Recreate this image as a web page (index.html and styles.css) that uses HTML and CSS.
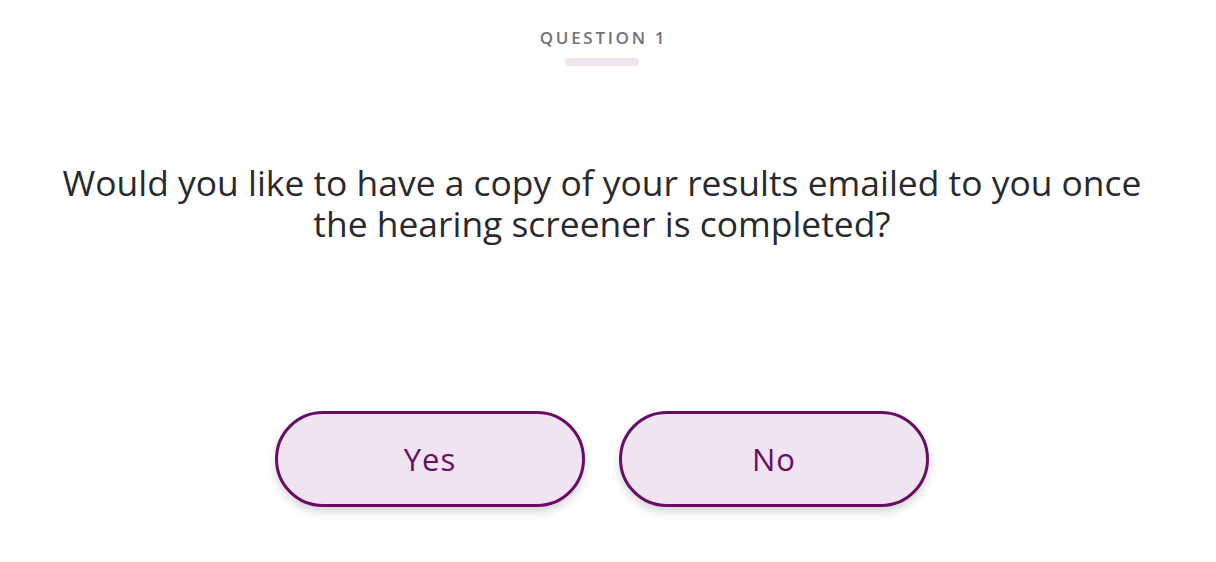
FILE: index.html
```html
<!DOCTYPE html>
<html lang="en">
<head>
  <meta charset="UTF-8">
  <meta name="viewport" content="width=device-width, initial-scale=1.0">
  <title>Hearing Screener</title>
  <link rel="stylesheet" href="styles.css">
</head>
<body>
  <div class="screen">
    <div class="step">
      <div class="step-label">QUESTION 1</div>
      <div class="step-bar"></div>
    </div>

    <h1 class="question">Would you like to have a copy of your results emailed to you once the hearing screener is completed?</h1>

    <div class="answers">
      <button class="answer-btn">Yes</button>
      <button class="answer-btn">No</button>
    </div>
  </div>
</body>
</html>
```

FILE: styles.css
```css
body {
  font-family: 'Open Sans', sans-serif;
  margin: 0;
  background: #fff;
}
.screen {
  width: 1204px;
  padding-bottom: 40px;
  display: flex;
  flex-direction: column;
  align-items: center;
}
.step {
  display: flex;
  flex-direction: column;
  align-items: center;
  padding-top: 26px;
}
.step-label {
  font-size: 17px;
  font-weight: 600;
  letter-spacing: 2.7px;
  color: #727276;
  line-height: 24px;
  margin-right: -3px;
}
.step-bar {
  width: 74px;
  height: 8px;
  margin-top: 8px;
  border-radius: 4px;
  background: #f1e3ef;
}
.question {
  max-width: 1090px;
  margin: 96px 0 0;
  font-size: 35.4px;
  font-weight: 400;
  line-height: 41px;
  text-align: center;
  color: #2a2a2c;
}
.answers {
  display: flex;
  gap: 34px;
  margin-top: 167px;
}
.answer-btn {
  width: 310px;
  height: 96px;
  border: 3px solid #6b0b68;
  border-radius: 48px;
  background: #f0e4f0;
  color: #6b0b68;
  font-family: 'Open Sans', sans-serif;
  font-size: 31px;
  letter-spacing: 1px;
  box-shadow: 0 5px 10px rgba(0, 0, 0, 0.16);
  cursor: pointer;
}
```
